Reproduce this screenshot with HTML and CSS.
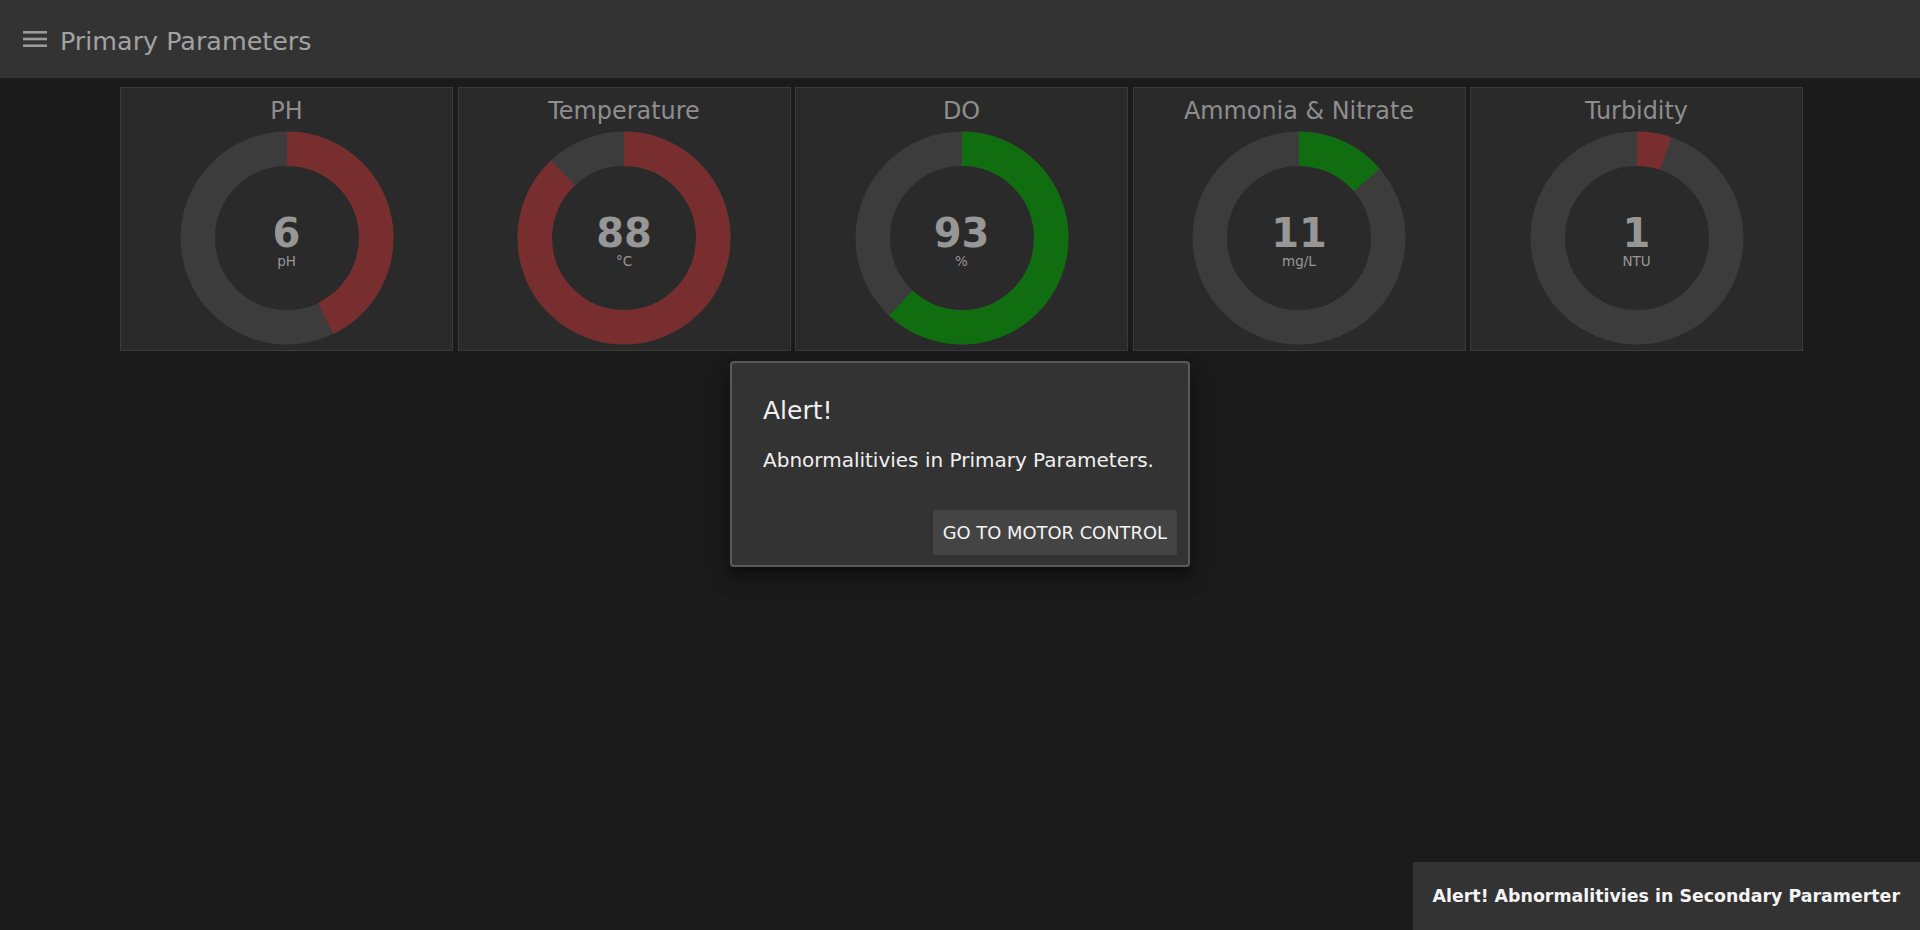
FILE: index.html
```html
<!DOCTYPE html>
<html lang="en">
<head>
<meta charset="utf-8">
<title>Primary Parameters</title>
<link rel="stylesheet" href="styles.css">
</head>
<body>
<header class="topbar">
  <svg class="menu-icon" width="24" height="18" viewBox="0 0 24 18" aria-hidden="true">
    <rect x="0" y="1" width="24" height="2.6" fill="#9a9a9a"/>
    <rect x="0" y="7.7" width="24" height="2.6" fill="#9a9a9a"/>
    <rect x="0" y="14.4" width="24" height="2.6" fill="#9a9a9a"/>
  </svg>
  <span class="topbar-title">Primary Parameters</span>
</header>

<main class="gauges">
  <section class="card">
    <h2 class="card-title">PH</h2>
    <div class="donut">
      <svg class="donut-svg" width="214" height="214" viewBox="0 0 214 214">
        <circle class="ring-bg" cx="107" cy="107" r="89.25"/>
        <circle class="ring-val red" cx="107" cy="107" r="89.25" pathLength="100" stroke-dasharray="42.86 100"/>
      </svg>
      <div class="donut-center">
        <div class="value">6</div>
        <div class="unit">pH</div>
      </div>
    </div>
  </section>

  <section class="card">
    <h2 class="card-title">Temperature</h2>
    <div class="donut">
      <svg class="donut-svg" width="214" height="214" viewBox="0 0 214 214">
        <circle class="ring-bg" cx="107" cy="107" r="89.25"/>
        <circle class="ring-val red" cx="107" cy="107" r="89.25" pathLength="100" stroke-dasharray="88 100"/>
      </svg>
      <div class="donut-center">
        <div class="value">88</div>
        <div class="unit">°C</div>
      </div>
    </div>
  </section>

  <section class="card">
    <h2 class="card-title">DO</h2>
    <div class="donut">
      <svg class="donut-svg" width="214" height="214" viewBox="0 0 214 214">
        <circle class="ring-bg" cx="107" cy="107" r="89.25"/>
        <circle class="ring-val green" cx="107" cy="107" r="89.25" pathLength="100" stroke-dasharray="62 100"/>
      </svg>
      <div class="donut-center">
        <div class="value">93</div>
        <div class="unit">%</div>
      </div>
    </div>
  </section>

  <section class="card">
    <h2 class="card-title">Ammonia &amp; Nitrate</h2>
    <div class="donut">
      <svg class="donut-svg" width="214" height="214" viewBox="0 0 214 214">
        <circle class="ring-bg" cx="107" cy="107" r="89.25"/>
        <circle class="ring-val green" cx="107" cy="107" r="89.25" pathLength="100" stroke-dasharray="13.75 100"/>
      </svg>
      <div class="donut-center">
        <div class="value">11</div>
        <div class="unit">mg/L</div>
      </div>
    </div>
  </section>

  <section class="card">
    <h2 class="card-title">Turbidity</h2>
    <div class="donut">
      <svg class="donut-svg" width="214" height="214" viewBox="0 0 214 214">
        <circle class="ring-bg" cx="107" cy="107" r="89.25"/>
        <circle class="ring-val red" cx="107" cy="107" r="89.25" pathLength="100" stroke-dasharray="5.25 100"/>
      </svg>
      <div class="donut-center">
        <div class="value">1</div>
        <div class="unit">NTU</div>
      </div>
    </div>
  </section>
</main>

<div class="dialog" role="alertdialog">
  <h3 class="dialog-title">Alert!</h3>
  <p class="dialog-text">Abnormalitivies in Primary Parameters.</p>
  <div class="dialog-actions">
    <button class="dialog-btn" type="button">GO TO MOTOR CONTROL</button>
  </div>
</div>

<div class="toast">Alert! Abnormalitivies in Secondary Paramerter</div>
</body>
</html>
```

FILE: styles.css
```css
html, body {
  margin: 0;
  padding: 0;
  height: 100%;
}

body {
  background: #1b1b1b;
  font-family: "DejaVu Sans", Verdana, sans-serif;
  color: #9a9a9a;
  overflow: hidden;
}

.topbar {
  box-sizing: border-box;
  height: 78px;
  padding: 3px 0 0 23px;
  background: #333333;
  display: flex;
  align-items: center;
}

.menu-icon {
  display: block;
  margin-right: 13px;
  margin-top: -3px;
}

.topbar-title {
  font-size: 25.4px;
  color: #a2a2a2;
  line-height: 30px;
}

.gauges {
  display: flex;
  justify-content: flex-start;
  gap: 4.5px;
  padding: 9px 0 0 120px;
}

.card {
  box-sizing: border-box;
  width: 333px;
  height: 264px;
  background: #2a2a2a;
  border: 1px solid #3b3b3b;
  display: flex;
  flex-direction: column;
  align-items: center;
  padding-top: 9px;
}

.card-title {
  margin: 0;
  font-size: 23.9px;
  font-weight: normal;
  line-height: 28px;
  color: #8e8e8e;
}

.donut {
  position: relative;
  width: 214px;
  height: 214px;
  margin-top: 6px;
}

.donut-svg {
  display: block;
  transform: rotate(-90deg);
}

.ring-bg {
  fill: none;
  stroke: #3c3c3c;
  stroke-width: 34.5;
}

.ring-val {
  fill: none;
  stroke-width: 34.5;
}

.ring-val.red {
  stroke: #782e2e;
}

.ring-val.green {
  stroke: #106d10;
}

.donut-center {
  position: absolute;
  inset: 0;
  display: flex;
  flex-direction: column;
  align-items: center;
  justify-content: center;
  padding-top: 6px;
  box-sizing: border-box;
}

.value {
  font-size: 40px;
  font-weight: bold;
  line-height: 40px;
  color: #979797;
}

.unit {
  font-size: 13.5px;
  line-height: 16px;
  color: #979797;
}

.dialog {
  position: absolute;
  left: 730px;
  top: 361px;
  box-sizing: border-box;
  width: 460px;
  height: 206px;
  background: #333333;
  border: 2px solid #595959;
  border-radius: 4px;
  padding: 33px 11px 10px 31px;
  box-shadow: 0 7px 8px -4px rgba(0, 0, 0, 0.3), 0 13px 19px 2px rgba(0, 0, 0, 0.2), 0 5px 24px 4px rgba(0, 0, 0, 0.18);
  display: flex;
  flex-direction: column;
}

.dialog-title {
  margin: 0;
  font-size: 25px;
  font-weight: normal;
  line-height: 30px;
  color: #f0f0f0;
}

.dialog-text {
  margin: 22px 0 0 0;
  font-size: 20px;
  line-height: 24px;
  color: #f0f0f0;
}

.dialog-actions {
  margin-top: auto;
  display: flex;
  justify-content: flex-end;
}

.dialog-btn {
  box-sizing: border-box;
  height: 45px;
  padding: 0 10px;
  background: #444444;
  border: none;
  border-radius: 2px;
  font-family: "DejaVu Sans", Verdana, sans-serif;
  font-size: 17.9px;
  color: #f4f4f4;
}

.toast {
  position: absolute;
  right: 0;
  bottom: 0;
  box-sizing: border-box;
  height: 68px;
  padding: 0 20px;
  background: #333333;
  display: flex;
  align-items: center;
  font-size: 17.4px;
  font-weight: bold;
  color: #f4f4f4;
}
```
